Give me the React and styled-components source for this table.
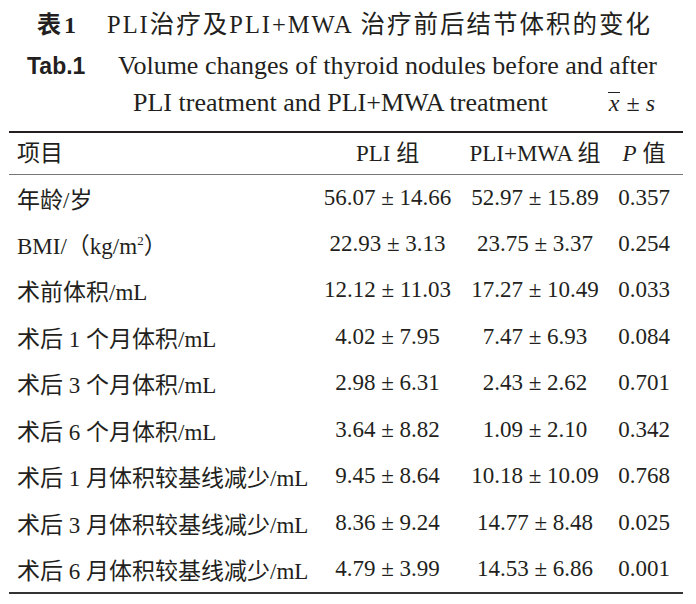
import React from 'react'
import styled, { createGlobalStyle } from 'styled-components'

const rows = [
  { label: '年龄/岁', a: '56.07 ± 14.66', b: '52.97 ± 15.89', p: '0.357' },
  { label: 'BMI/（kg/m', sup: '2', tail: '）', a: '22.93 ± 3.13', b: '23.75 ± 3.37', p: '0.254' },
  { label: '术前体积/mL', a: '12.12 ± 11.03', b: '17.27 ± 10.49', p: '0.033' },
  { label: '术后 1 个月体积/mL', a: '4.02 ± 7.95', b: '7.47 ± 6.93', p: '0.084' },
  { label: '术后 3 个月体积/mL', a: '2.98 ± 6.31', b: '2.43 ± 2.62', p: '0.701' },
  { label: '术后 6 个月体积/mL', a: '3.64 ± 8.82', b: '1.09 ± 2.10', p: '0.342' },
  { label: '术后 1 月体积较基线减少/mL', a: '9.45 ± 8.64', b: '10.18 ± 10.09', p: '0.768' },
  { label: '术后 3 月体积较基线减少/mL', a: '8.36 ± 9.24', b: '14.77 ± 8.48', p: '0.025' },
  { label: '术后 6 月体积较基线减少/mL', a: '4.79 ± 3.99', b: '14.53 ± 6.86', p: '0.001' },
]

const Global = createGlobalStyle`
  body {
    margin: 0;
    background: #fff;
    color: #231f20;
    font-family: "Liberation Serif", "Noto Sans CJK SC", serif;
  }
`

export default function App() {
  return (
    <Page>
      <Global />
      <Caption>
        <CnLine>
          <CnLabel>表1</CnLabel>
          <CnTitle>PLI治疗及PLI+MWA 治疗前后结节体积的变化</CnTitle>
        </CnLine>
        <EnLine>
          <EnLabel>Tab.1</EnLabel>
          <EnTitle>Volume changes of thyroid nodules before and after</EnTitle>
        </EnLine>
        <EnLine2>
          <EnTitle>PLI treatment and PLI+MWA treatment</EnTitle>
          <Stat>
            <Bar>x</Bar> ± <i>s</i>
          </Stat>
        </EnLine2>
      </Caption>
      <Table>
        <thead>
          <HeadRow>
            <LabelCell>项目</LabelCell>
            <ValCell $w={145}>PLI 组</ValCell>
            <ValCell $w={150}>PLI+MWA 组</ValCell>
            <PCell>
              <i>P</i> 值
            </PCell>
          </HeadRow>
        </thead>
        <tbody>
          {rows.map((r) => (
            <Row key={r.label}>
              <LabelCell>
                {r.label}
                {r.sup && <Sup>{r.sup}</Sup>}
                {r.tail}
              </LabelCell>
              <ValCell $w={145}>{r.a}</ValCell>
              <ValCell $w={150}>{r.b}</ValCell>
              <PCell>{r.p}</PCell>
            </Row>
          ))}
        </tbody>
      </Table>
    </Page>
  )
}

const Page = styled.div`
  width: 696px;
  height: 604px;
  padding-top: 6px;
  box-sizing: border-box;
`

const Caption = styled.div`
  display: flex;
  flex-direction: column;
`

const CnLine = styled.div`
  display: flex;
  align-items: center;
  height: 32px;
  padding-left: 37px;
  font-size: 24.5px;
`

const CnLabel = styled.span`
  font-weight: 700;
  font-size: 24px;
  letter-spacing: 3px;
  width: 70px;
`

const CnTitle = styled.span`
  white-space: pre;
  letter-spacing: 2px;
`

const EnLine = styled.div`
  display: flex;
  align-items: center;
  height: 32px;
  margin-top: 12px;
  padding-left: 27px;
  font-size: 26px;
`

const EnLabel = styled.span`
  font-family: "Liberation Sans", sans-serif;
  font-weight: 700;
  font-size: 23px;
  width: 91px;
`

const EnTitle = styled.span`
  white-space: pre;
`

const EnLine2 = styled.div`
  display: flex;
  align-items: center;
  height: 32px;
  margin-top: 5px;
  padding-left: 133px;
  font-size: 26px;
`

const Stat = styled.span`
  margin-left: auto;
  margin-right: 41px;
  font-size: 24px;
`

const Bar = styled.i`
  display: inline-block;
  line-height: 0.8;
  border-top: 1.5px solid #231f20;
  padding: 1px 1px 0;
`

const Table = styled.table`
  margin: 12px 0 0 9px;
  width: 674px;
  border-collapse: collapse;
  border-top: 2px solid #231f20;
  border-bottom: 2px solid #333;
  font-size: 23px;
`

const HeadRow = styled.tr`
  height: 42px;
  border-bottom: 1.5px solid #777;

  td {
    padding-bottom: 4px;
  }
`

const Row = styled.tr`
  height: 46.5px;
`

const LabelCell = styled.td`
  padding: 0 0 0 8px;
  width: 298px;
  white-space: pre;
`

const ValCell = styled.td`
  width: ${(p) => p.$w}px;
  padding: 0;
  text-align: center;
  white-space: pre;
`

const PCell = styled.td`
  padding: 0 5px 0 0;
  text-align: center;
  white-space: pre;
`

const Sup = styled.sup`
  font-size: 13px;
  line-height: 0;
`
